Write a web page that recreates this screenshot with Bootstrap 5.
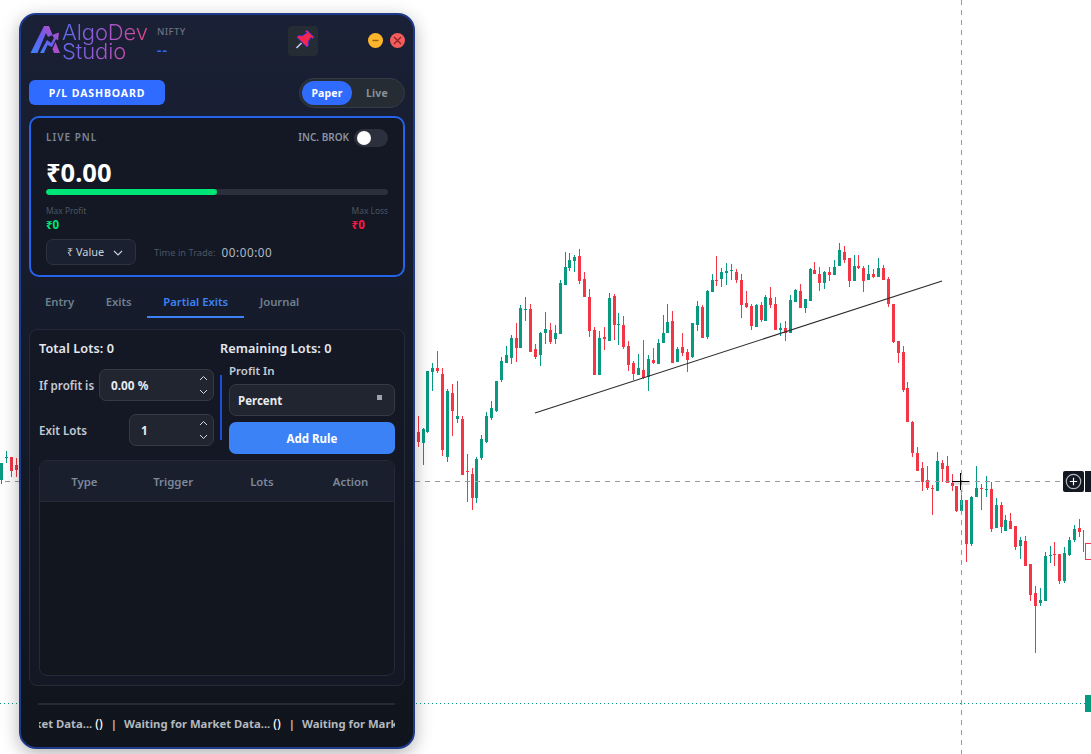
<!DOCTYPE html>
<html lang="en"><head><meta charset="utf-8"><title>AlgoDev Studio</title>
<link href="https://cdn.jsdelivr.net/npm/bootstrap@5.3.0/dist/css/bootstrap.min.css" rel="stylesheet">
<style>
html,body{height:100%;margin:0;overflow:hidden;background:#fff;font-family:"Noto Sans",sans-serif}
.stage{position:relative;width:1091px;height:754px;overflow:hidden}
.chart-svg{position:absolute;left:0;top:0}
.xh-tag{position:absolute;left:1063px;top:471px;width:21px;height:21px;background:#131722;border-radius:2px;display:flex;align-items:center;justify-content:center}
.xh-tag2{position:absolute;left:1085px;top:471px;width:6px;height:21px;background:#131722}
.panel{position:absolute;left:19px;top:13px;width:396px;height:736px;border:2px solid #1e3a8a;border-radius:17px;background:linear-gradient(180deg,#1a2035 0,#161b2b 45%,#10141c 100%);box-shadow:0 5px 18px rgba(0,0,0,.3);padding:0 8px;display:flex;flex-direction:column;color:#fff}
.head-row{height:63px;display:flex;align-items:flex-start;position:relative}
.head-row>*{flex:none}
.logo-wrap{display:flex;align-items:flex-start;width:99px;margin-top:7px;margin-left:-1px}
.logo-wrap svg{flex:none}
.logo-txt{font-family:"Inter",sans-serif;font-weight:300;font-size:22px;line-height:19px;background:linear-gradient(100deg,#5b6cf5 0,#a855c8 55%,#e0457f 100%);-webkit-background-clip:text;background-clip:text;color:transparent;margin-left:-6px;margin-top:1px;letter-spacing:-.1px;flex:none}
.sym-box{width:50px;margin-left:30px;margin-top:12px;line-height:1}
.sym-name{font-size:9.5px;letter-spacing:.4px;color:#6b7280;font-weight:500}
.sym-val{font-size:14px;color:#2f6bff;margin-top:6px;letter-spacing:1px;font-weight:600}
.pin-btn{width:30px;height:30px;background:#262c33;border-radius:4px;border:0;padding:0;margin-left:81px;margin-top:11px;display:block}
.pin-btn svg{display:block}
.win-btn{width:15px;height:15px;border-radius:50%;border:0;padding:0;display:flex;align-items:center;justify-content:center;margin-top:18px}
.win-min{background:#fbb62c;margin-left:50px}
.win-close{background:#f25c5c;margin-left:7px}
.dash-row{display:flex;justify-content:space-between;align-items:flex-start;height:38px;margin-bottom:0}
.btn.dash-btn{width:136px;height:25px;margin-top:2px;background:#2f6bff;border:0;border-radius:6px;color:#fff;font-size:10.5px;font-weight:700;letter-spacing:.9px;padding:1px 0 0;line-height:24px}
.mode-tog{width:106px;height:30px;background:#252c33;border:1px solid #353b44;border-radius:15px;display:flex;align-items:center;padding:0 2px;font-size:10.5px;font-weight:700;letter-spacing:.15px}
.mode-on{width:50px;height:24px;background:#2f6bff;border-radius:12px;display:flex;align-items:center;justify-content:center;color:#fff;padding-top:2px}
.mode-off{flex:1;text-align:center;color:#8a9097;padding-top:2px}
.pnl-card{height:161px;background:#131824;border:2px solid #2563eb;border-radius:10px;padding:0 15px;position:relative;color:#fff}
.pnl-top{display:flex;justify-content:space-between;align-items:center;height:37px;padding-top:2px}
.lbl-live{font-size:10px;font-weight:600;letter-spacing:1px;color:#7c8594}
.lbl-inc{font-size:10px;font-weight:600;letter-spacing:0;color:#8b93a0}
.sw{width:34px;height:18px;background:#2b303c;border-radius:9px;margin-left:5px;position:relative;display:inline-block;vertical-align:middle}
.sw i{position:absolute;left:3px;top:2px;width:14px;height:14px;border-radius:50%;background:#fff}
.pnl-val{font-size:25.5px;font-weight:700;line-height:28px;margin-top:3px;height:28px}
.pnl-bar.progress{height:6px;background:#2b303c;border-radius:3px;margin-top:3px}
.pnl-bar .progress-bar{background:#00e676;border-radius:3px}
.lim-row{display:flex;justify-content:space-between;margin-top:10px;font-size:8.4px;color:#4d5562;line-height:12px}
.lim-val{font-size:11.5px;font-weight:700;line-height:16px;margin-top:0}
.pos{color:#00e676}.neg{color:#ff1744}
.val-row{display:flex;align-items:center;margin-top:6px}
.val-sel{width:90px;height:26px;background:#1a2030;border:1px solid #2b3240;border-radius:7px;font-size:10.9px;color:#cbd1d8;display:flex;align-items:center;justify-content:center;gap:9px;padding:1px 0 0 8px}
.tit-l{font-size:9.3px;color:#4d5562;margin-left:18px;padding-top:1px}
.tit-v{font-size:11.7px;color:#b4bac4;margin-left:6px;letter-spacing:.55px;padding-top:1px}
.tab-row.nav{height:52px;flex-wrap:nowrap;border:0;margin-bottom:0}
.tab-row .nav-link{border:0;background:none;padding:0 15.5px 0 16px;height:41px;line-height:49px;font-size:11.3px;font-weight:600;color:#6e8090;border-bottom:2px solid transparent;border-radius:0;margin-top:0}
.tab-row .nav-link.active{color:#3b82f6;border-bottom-color:#3b82f6;background:none}
.work.card{height:357px;background:#141825;border:1px solid #252a38;border-radius:8px;padding:9px 9px;color:#fff}
.lots-row{display:flex;font-size:12.7px;font-weight:600;color:#e4e8ee;line-height:19px;letter-spacing:.1px}
.lots-row span:first-child{width:181px}
.form-grid{display:flex;margin-top:2px;height:92px}
.fg-left{width:176px;padding-top:9px}
.fg-line{display:flex;align-items:center;justify-content:space-between;font-size:11.6px;font-weight:600;color:#c4cbd4;white-space:nowrap}
.fg-text{padding-top:2px}
.fg-line+.fg-line{margin-top:13px}
.sp-input{height:32px;background:#20252f;border:1px solid #343b47;border-radius:7px;display:flex;align-items:center;justify-content:space-between;padding:1px 5px 0 11px;font-size:11.8px;font-weight:700;color:#e8ebef}
.sp-a{width:115px}.sp-b{width:85px}
.sp-input svg{margin-top:-1px}
.divider{width:2px;height:65px;background:#1d4ed8;margin:15px 0 0 6px}
.fg-right{width:166px;margin-left:7px}
.pf-lbl{font-size:11.5px;font-weight:600;color:#c4cbd4;line-height:17px;margin-top:2px}
.sel-box{height:32px;background:#20252f;border:1px solid #343b47;border-radius:7px;margin-top:5px;display:flex;align-items:center;justify-content:space-between;padding:1px 12px 0 8px;font-size:11.5px;font-weight:700;color:#e8ebef}
.sel-box i{width:5px;height:5px;background:#9aa4af;display:block;margin-top:-7px}
.btn.add-btn{width:166px;height:32px;background:#3b82f6;border:0;border-radius:7px;margin-top:6px;font-size:11.5px;font-weight:700;color:#fff;padding:1px 0 0}
.tbl-box{margin-top:8px;height:216px;border:1px solid #232a3a;border-radius:8px;background:#12161f;overflow:hidden}
.tbl-box table{table-layout:fixed;width:355px;margin:0;--bs-table-bg:transparent;--bs-table-color:#7d8899}
.tbl-box th{background:#1a1f2e;height:40px;border-bottom:1px solid #232a3a;font-size:11.4px;font-weight:600;text-align:center;vertical-align:middle;color:#7d8899;padding:1px 0 0}
.foot-line{border-top:2px solid #262a33;margin:17px 0 0 9px;width:357px;opacity:1}
.tick{margin:10px 0 0 10px;width:356px;overflow:hidden;white-space:nowrap;font-size:11.3px;font-weight:700;color:#b3b8bf;line-height:17px}
.tick-in{margin-left:-93px;display:inline-flex}
.tick-in span{width:178px;flex:none}
.tick-in b{color:#fff;font-weight:500;font-size:12px}
.tick-in u{color:#e4e7ea;text-decoration:none;margin-left:8px;font-weight:500}
</style></head><body>
<div class="stage">
<svg class="chart-svg" id="chart" width="1091" height="754" shape-rendering="crispEdges" xmlns="http://www.w3.org/2000/svg">
<g id="candles"></g>
<line x1="0" y1="481.5" x2="1063" y2="481.5" stroke="#9598a1" stroke-width="1" stroke-dasharray="5 5" stroke-dashoffset="5"/>
<line x1="961.5" y1="0" x2="961.5" y2="754" stroke="#9598a1" stroke-width="1" stroke-dasharray="5 5"/>
<line x1="0" y1="703.5" x2="1085" y2="703.5" stroke="#089981" stroke-width="1" stroke-dasharray="1 3"/>
<rect x="1085" y="695" width="6" height="17" fill="#089981"/>
<rect x="1083" y="530" width="1" height="22" fill="#f23645"/>
<path d="M1085 543h6v1h-5v15h5v1h-6z" fill="#f23645"/>
<line x1="535" y1="413" x2="942" y2="281" stroke="#2a2a2a" stroke-width="1.1" shape-rendering="geometricPrecision"/>
<g shape-rendering="geometricPrecision"><path d="M952 482.5h17M960.5 474v17" stroke="#000" stroke-opacity=".12" stroke-width="3" transform="translate(1 1)"/></g>
<path d="M952 481.5h17M960.5 473v17" stroke="#000" stroke-width="1"/>
</svg>
<div class="xh-tag"><svg width="17" height="17" viewBox="0 0 17 17"><circle cx="8.5" cy="8.5" r="7.2" fill="none" stroke="#b5b8be" stroke-width="1.2"/><path d="M8.5 4.8v7.4M4.8 8.5h7.4" stroke="#fff" stroke-width="1.2"/></svg></div>
<div class="xh-tag2"></div>

<div class="panel">
  <div class="head-row">
    <div class="logo-wrap">
      <svg width="40" height="36" viewBox="0 0 40 36"><defs><linearGradient id="lg" x1="0" y1="1" x2="1" y2="0"><stop offset="0" stop-color="#3b82f6"/><stop offset=".55" stop-color="#6a5cf2"/><stop offset="1" stop-color="#b84fc4"/></linearGradient></defs><path d="M2.5 31 16 4h5l3.5 9-4.5 2-2-4-8.5 20z" fill="url(#lg)"/><path d="M12 31l7-13 4 3 3-5-2-3 7-2.5-1 8-2-1.5-4 8-4.5-2L16 31z" fill="url(#lg)"/><path d="M27.5 20 32 31h-6l-1.500-4z" fill="#a94fce"/></svg>
      <div class="logo-txt">AlgoDev<br>Studio</div>
    </div>
    <div class="sym-box"><div class="sym-name">NIFTY</div><div class="sym-val">--</div></div>
    <button class="pin-btn" type="button" aria-label="Pin"><svg width="30" height="30" viewBox="0 0 30 30"><path d="M8.5 22 13.500 17" stroke="#c9c6f5" stroke-width="1.6"/><g transform="translate(16 14) rotate(45)"><path d="M-5-9H5V-7H3L4-2 7 1V3H-7V1L-4-2-3-7H-5Z" fill="#f5264b" stroke="#4a2ee0" stroke-width=".9" stroke-linejoin="round"/></g></svg></button>
    <button class="win-btn win-min" type="button" aria-label="Minimise"><svg width="9" height="9" viewBox="0 0 9 9"><path d="M1.5 4.5h6" stroke="#9a6510" stroke-width="1.4"/></svg></button>
    <button class="win-btn win-close" type="button" aria-label="Close"><svg width="9" height="9" viewBox="0 0 9 9"><path d="M1 1l7 7M8 1l-7 7" stroke="#8a1f1f" stroke-width="1.2"/></svg></button>
  </div>
  <div class="dash-row">
    <button class="btn dash-btn" type="button">P/L DASHBOARD</button>
    <div class="mode-tog"><div class="mode-on">Paper</div><div class="mode-off">Live</div></div>
  </div>
  <div class="pnl-card">
    <div class="pnl-top"><span class="lbl-live">LIVE PNL</span><span class="lbl-inc d-flex align-items-center">INC. BROK<span class="sw"><i></i></span></span></div>
    <div class="pnl-val">₹0.00</div>
    <div class="progress pnl-bar"><div class="progress-bar" style="width:50%"></div></div>
    <div class="lim-row">
      <div>Max Profit<div class="lim-val pos">₹0</div></div>
      <div class="text-end">Max Loss<div class="lim-val neg text-start">₹0</div></div>
    </div>
    <div class="val-row">
      <div class="val-sel">₹ Value <svg width="10" height="6" viewBox="0 0 10 6"><path d="M1 1l4 4 4-4" fill="none" stroke="#cbd1d8" stroke-width="1.1"/></svg></div>
      <span class="tit-l">Time in Trade:</span><span class="tit-v">00:00:00</span>
    </div>
  </div>
  <ul class="nav tab-row">
    <li class="nav-item"><a class="nav-link" href="#">Entry</a></li>
    <li class="nav-item"><a class="nav-link" href="#">Exits</a></li>
    <li class="nav-item"><a class="nav-link active" href="#">Partial Exits</a></li>
    <li class="nav-item"><a class="nav-link" href="#">Journal</a></li>
  </ul>
  <div class="card work">
    <div class="lots-row"><span>Total Lots: 0</span><span>Remaining Lots: 0</span></div>
    <div class="form-grid">
      <div class="fg-left">
        <div class="fg-line"><span class="fg-text">If profit is</span><div class="sp-input sp-a">0.00 %<svg width="9" height="22" viewBox="0 0 9 22"><path d="M1 6l3.5-3.5L8 6M1 16l3.5 3.500L8 16" fill="none" stroke="#d5d9df" stroke-width="1"/></svg></div></div>
        <div class="fg-line"><span class="fg-text">Exit Lots</span><div class="sp-input sp-b">1<svg width="9" height="22" viewBox="0 0 9 22"><path d="M1 6l3.5-3.5L8 6M1 16l3.5 3.500L8 16" fill="none" stroke="#d5d9df" stroke-width="1"/></svg></div></div>
      </div>
      <div class="divider"></div>
      <div class="fg-right">
        <div class="pf-lbl">Profit In</div>
        <div class="sel-box">Percent<i></i></div>
        <button class="btn add-btn" type="button">Add Rule</button>
      </div>
    </div>
    <div class="tbl-box"><table class="table table-borderless"><thead><tr><th>Type</th><th>Trigger</th><th>Lots</th><th>Action</th></tr></thead><tbody></tbody></table></div>
  </div>
  <hr class="foot-line">
  <div class="tick"><div class="tick-in"><span>Waiting for Market Data... <b>()</b><u>|</u></span><span>Waiting for Market Data... <b>()</b><u>|</u></span><span>Waiting for Market Data... <b>()</b><u>|</u></span></div></div>
</div>
</div>
<script>
var G='#089981',R='#f23645';
function draw(ox,list){var h='';list.forEach(function(c){var cx=Math.round(ox+c[0]/3-.5),col=c[5]?R:G;
 var y=function(v){return Math.round(230+v/3)};
 h+='<rect x="'+cx+'" y="'+y(c[1])+'" width="1" height="'+(y(c[2])-y(c[1]))+'" fill="'+col+'"/>';
 h+='<rect x="'+(cx-1)+'" y="'+y(c[3])+'" width="3" height="'+Math.max(1,y(c[4])-y(c[3]))+'" fill="'+col+'"/>';});
 document.getElementById('candles').innerHTML+=h;}
draw(415,[[10,558,650,606,636,1],[25,595,705,598,639,0],[37,423,608,423,605,0],[52,400,482,414,426,0],[67,363,430,414,423,1],[82,414,678,432,660,1],[97,477,696,483,681,0],[112,462,618,489,543,1],[127,453,578,558,567,0],[142,558,735,567,735,1],[157,672,816,723,726,1],[172,714,840,732,804,1],[184,681,819,687,804,0],[199,615,690,627,684,0],[214,546,639,558,636,0],[229,513,570,534,564,0],[244,453,546,453,543,0],[259,381,456,393,450,0],[274,348,399,375,399,0],[289,315,402,324,384,0],[304,279,396,324,354,1],[316,225,354,234,354,0],[331,201,273,237,240,0],[346,222,366,237,366,1],[361,342,387,357,381,1],[376,306,408,309,375,0],[391,246,342,297,309,0],[406,279,342,300,336,1],[421,285,342,309,327,0],[436,150,312,159,312,0],[451,66,165,111,165,0],[463,69,123,90,114,0],[478,75,126,81,93,0],[493,57,162,78,153,1],[508,126,201,147,201,1],[523,177,321,201,303,1],[538,291,435,300,435,1],[553,303,435,324,435,0],[568,291,360,321,327,1],[583,189,333,204,333,0],[598,192,330,198,285,1],[610,249,345,282,285,0],[625,258,357,285,351,1],[640,333,423,348,405,1],[655,393,450,399,432,1],[670,372,435,414,435,0],[685,330,447,420,444,1],[700,375,483,387,441,0],[715,354,402,390,399,1],[730,327,402,339,402,0],[745,255,339,309,339,0],[757,222,309,276,309,0],[772,243,399,273,399,1],[787,351,396,357,396,0],[802,309,378,351,369,1],[817,357,426,366,390,1],[832,279,384,279,381,0],[847,213,303,228,285,0],[862,225,324,231,324,1],[877,180,327,183,321,0],[892,132,186,150,186,0],[904,78,168,150,153,1],[919,114,171,126,147,0],[934,99,165,123,129,0],[949,102,150,120,123,0],[964,117,159,126,150,1],[979,132,264,150,225,1],[994,183,234,219,231,1],[1009,222,300,228,288,1]]);
draw(750,[[18,222,291,225,291,0],[33,216,276,225,270,1],[46,195,273,201,273,0],[61,171,234,204,225,1],[76,201,300,222,300,1],[91,279,318,294,300,0],[106,273,333,294,309,1],[121,195,309,210,309,0],[136,177,216,180,216,0],[151,162,234,183,234,1],[166,207,249,207,234,0],[181,114,213,117,213,0],[193,96,132,120,132,1],[208,111,183,132,159,1],[223,123,177,126,159,0],[238,111,153,126,135,1],[253,90,135,111,135,0],[268,39,108,60,108,0],[283,48,99,66,90,1],[298,84,171,84,153,1],[313,75,153,108,153,0],[325,75,117,108,114,1],[340,108,186,114,153,1],[355,105,150,132,150,0],[370,117,144,132,141,1],[385,84,141,114,141,0],[400,105,150,114,150,1],[415,141,231,147,222,1],[430,222,339,222,336,1],[445,333,399,333,369,1],[460,348,486,366,480,1],[472,456,576,474,576,1],[487,573,681,576,669,1],[502,651,723,669,723,1],[517,696,783,714,756,1],[532,708,780,750,774,1],[547,765,855,774,777,1],[562,666,783,693,783,0],[577,690,756,699,717,1],[592,678,759,708,759,1],[607,732,783,759,768,1],[619,768,846,768,843,1],[634,795,843,810,843,0],[649,810,996,810,942,1],[664,798,948,801,942,0],[679,708,801,774,801,0],[694,762,840,774,777,1],[709,738,801,777,780,0],[724,756,906,777,897,1],[739,804,894,825,894,0],[754,816,909,825,891,1],[766,855,903,870,903,0],[781,849,897,873,897,1],[796,888,960,888,951,1],[811,921,987,930,948,0],[826,918,1008,933,1008,1],[841,1002,1113,1002,1095,1],[856,1068,1269,1089,1128,1],[871,1074,1128,1110,1119,0],[886,966,1113,978,1113,0],[901,948,1000,975,978,0],[913,936,1008,972,975,1],[928,972,1062,972,1053,1],[943,951,1059,969,1053,0],[958,921,978,930,975,0],[973,885,936,897,930,0],[988,867,921,894,906,1]]);
draw(0,[[3,699,762,699,750,0],[18,663,699,681,684,0],[33,681,741,681,723,1],[48,684,741,705,720,1]]);
</script>
<script src="https://cdn.jsdelivr.net/npm/bootstrap@5.3.0/dist/js/bootstrap.bundle.min.js"></script>
</body></html>
